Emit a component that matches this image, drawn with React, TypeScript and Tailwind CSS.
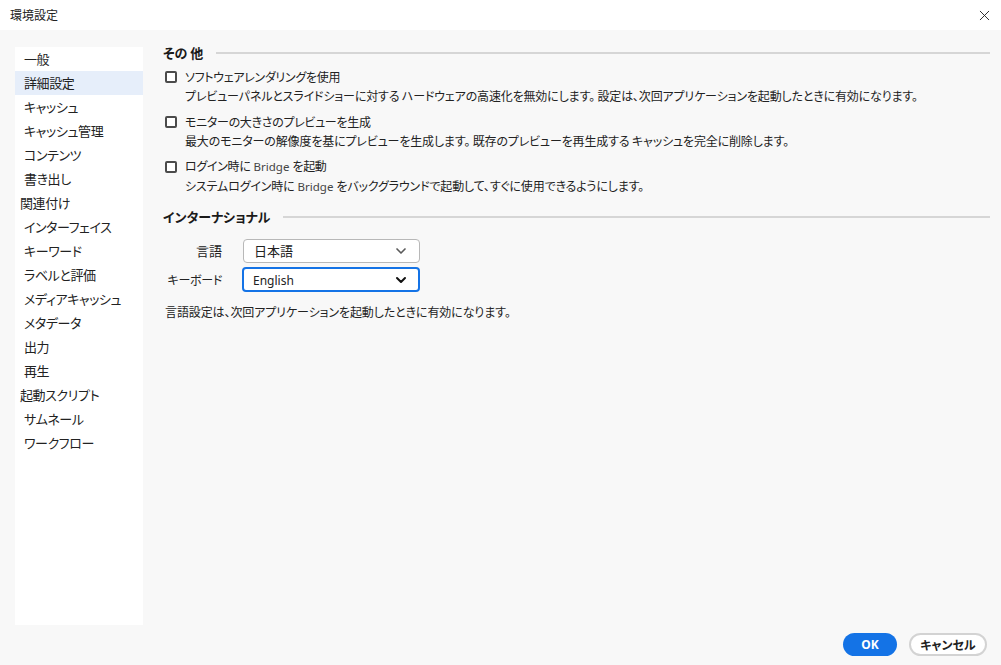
import { X, ChevronDown } from 'lucide-react';

const jp = "font-['Noto_Sans_CJK_JP',sans-serif] [font-feature-settings:'palt']";

const navItems = [
  { label: '一般' },
  { label: '詳細設定', active: true },
  { label: 'キャッシュ' },
  { label: 'キャッシュ管理' },
  { label: 'コンテンツ' },
  { label: '書き出し' },
  { label: '関連付け', tight: true },
  { label: 'インターフェイス' },
  { label: 'キーワード' },
  { label: 'ラベルと評価' },
  { label: 'メディアキャッシュ' },
  { label: 'メタデータ' },
  { label: '出力' },
  { label: '再生' },
  { label: '起動スクリプト', tight: true },
  { label: 'サムネール' },
  { label: 'ワークフロー' },
];

function Bridge() {
  return <span className="font-['Noto_Sans',sans-serif] text-[11.5px] tracking-normal text-[#444] mx-[3px]">Bridge</span>;
}

function SectionTitle({ children }: { children: React.ReactNode }) {
  return (
    <div className="flex items-center h-[20px] gap-[13px]">
      <span className="text-[13px] font-bold text-[#1a1a1a] whitespace-nowrap">{children}</span>
      <div className="flex-1 h-[2px] bg-[#d6d6d6]" />
    </div>
  );
}

function CheckOption({ label, desc }: { label: React.ReactNode; desc: React.ReactNode }) {
  return (
    <div className="flex flex-col">
      <div className="flex items-center h-[19px]">
        <span className="w-[12px] h-[12px] ml-[2px] border-2 border-[#4b4b4b] rounded-[2px] bg-white" />
        <span className="ml-[8px] text-[12px] tracking-[-0.3px] text-[#222]">{label}</span>
      </div>
      <div className="pl-[22px] h-[19px] leading-[19px] text-[12px] tracking-[-0.15px] text-[#222] whitespace-nowrap">{desc}</div>
    </div>
  );
}

function SelectBox({ value, focused }: { value: React.ReactNode; focused?: boolean }) {
  return (
    <div
      className={
        focused
          ? 'w-[178px] h-[25px] flex items-center justify-between px-[9px] bg-white rounded-[4px] border-2 border-[#1473e6]'
          : 'w-[177px] h-[24px] flex items-center justify-between px-[10px] bg-white rounded-[4px] border border-[#b8b8b8]'
      }
    >
      <span className="text-[13px] text-[#222]">{value}</span>
      <ChevronDown
        size={16}
        strokeWidth={focused ? 3 : 2.5}
        className={focused ? 'text-[#111]' : 'text-[#5a5a5a]'}
      />
    </div>
  );
}

export default function App() {
  return (
    <div className={`w-[1001px] h-[665px] flex flex-col bg-[#f8f8f8] overflow-hidden ${jp}`}>
      <div className="h-[30px] bg-white flex items-center justify-between pl-[10px] pr-[8px] shrink-0">
        <span className="text-[12px] text-[#222]">環境設定</span>
        <X size={17} strokeWidth={1.3} className="text-[#222]" />
      </div>

      <div className="flex-1 flex flex-col min-h-0">
        <div className="flex flex-1 min-h-0">
          <div className="mt-[17px] ml-[15px] w-[128px] h-[578px] bg-white shrink-0 flex flex-col">
            {navItems.map(item => (
              <div
                key={item.label}
                className={
                  'h-[24px] flex items-center text-[13px] tracking-[-0.4px] text-[#222] ' +
                  (item.tight ? 'pl-[5px] ' : 'pl-[9px] ') +
                  (item.active ? 'bg-[#e6eefa]' : '')
                }
              >
                {item.label}
              </div>
            ))}
          </div>

          <div className="flex-1 pl-[20px] pr-[11px] pt-[13px] flex flex-col">
            <SectionTitle>その 他</SectionTitle>
            <div className="mt-[4px] flex flex-col gap-[7px]">
              <CheckOption
                label="ソフトウェアレンダリングを使用"
                desc="プレビューパネルとスライドショーに対する ハードウェアの高速化を無効にします。 設定は、次回アプリケーションを起動したときに有効になります。"
              />
              <CheckOption
                label="モニターの大きさのプレビューを生成"
                desc="最大のモニターの解像度を基にプレビューを生成します。 既存のプレビューを再生成する キャッシュを完全に削除します。"
              />
              <CheckOption
                label={<>ログイン時に<Bridge />を起動</>}
                desc={<>システムログイン時に<Bridge />をバックグラウンドで起動して、すぐに使用できるようにします。</>}
              />
            </div>

            <div className="mt-[12px]">
              <SectionTitle>インターナショナル</SectionTitle>
            </div>

            <div className="mt-[12px] flex flex-col gap-[4px]">
              <div className="flex items-center">
                <span className="w-[59px] text-right text-[13px] text-[#222]">言語</span>
                <div className="ml-[21px]">
                  <SelectBox value="日本語" />
                </div>
              </div>
              <div className="flex items-center">
                <span className="w-[59px] text-right text-[12px] tracking-[-0.3px] text-[#222] whitespace-nowrap">キーボード</span>
                <div className="ml-[20px]">
                  <SelectBox value={<span className="font-['Noto_Sans',sans-serif] text-[12px]">English</span>} focused />
                </div>
              </div>
            </div>

            <div className="mt-[10px] pl-[2px] h-[19px] leading-[19px] text-[12px] tracking-[-0.1px] text-[#222]">
              言語設定は、次回アプリケーションを起動したときに有効になります。
            </div>
          </div>
        </div>

        <div className="h-[40px] shrink-0 flex items-start justify-end gap-[12px] pr-[14px] pt-[8px]">
          <button className="w-[54px] h-[23px] rounded-full bg-[#1473e6] text-white text-[12px] font-bold font-['Noto_Sans',sans-serif]">
            OK
          </button>
          <button className="w-[78px] h-[23px] rounded-full bg-white border-2 border-[#d3d3d3] text-[#222] text-[12px] font-bold">
            キャンセル
          </button>
        </div>
      </div>
    </div>
  );
}
